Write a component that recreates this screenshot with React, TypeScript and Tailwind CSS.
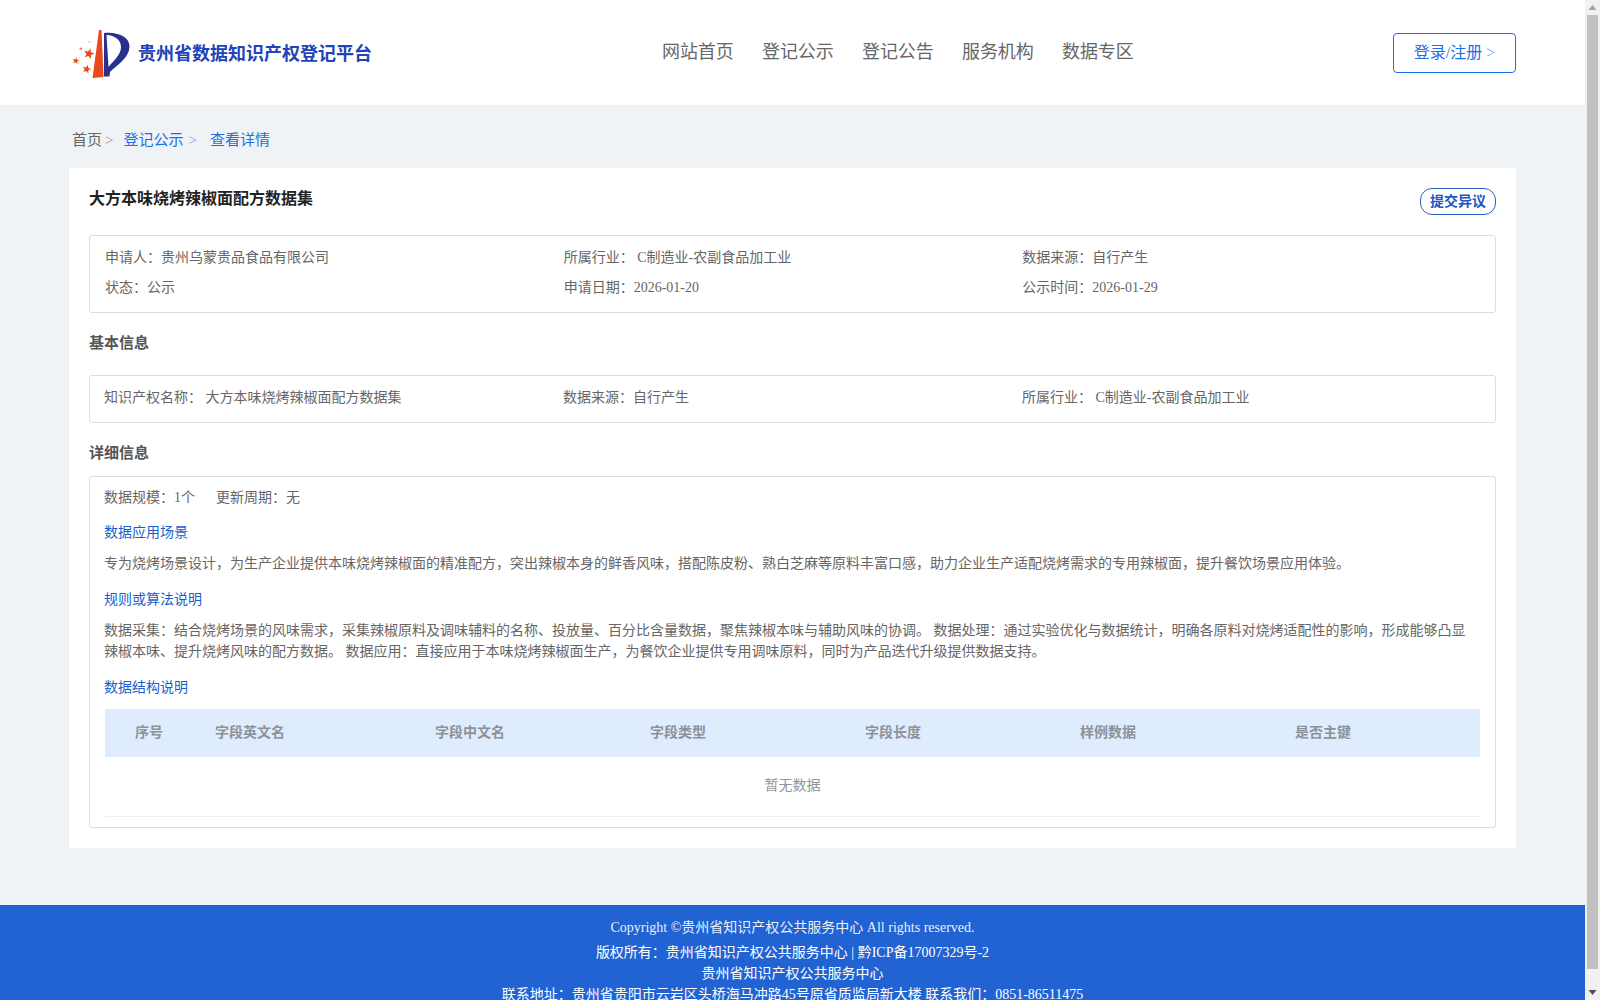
const FONT = "font-['Liberation_Serif','Noto_Sans_CJK_SC',serif]";

const NAV = ["网站首页", "登记公示", "登记公告", "服务机构", "数据专区"];

const COLUMNS = [
  { label: "序号", width: "w-[80px]" },
  { label: "字段英文名", width: "w-[220px]" },
  { label: "字段中文名", width: "w-[215px]" },
  { label: "字段类型", width: "w-[215px]" },
  { label: "字段长度", width: "w-[215px]" },
  { label: "样例数据", width: "w-[215px]" },
  { label: "是否主键", width: "flex-1" },
];

function starPoints(cx: number, cy: number, r: number, rot: number) {
  const pts: string[] = [];
  for (let i = 0; i < 10; i++) {
    const radius = i % 2 === 0 ? r : r * 0.42;
    const a = ((rot + i * 36 - 90) * Math.PI) / 180;
    pts.push(`${(cx + radius * Math.cos(a)).toFixed(2)},${(cy + radius * Math.sin(a)).toFixed(2)}`);
  }
  return pts.join(" ");
}

function Logo() {
  return (
    <svg viewBox="70 26 62 52" className="w-[62px] h-[52px] shrink-0">
      <polygon points={starPoints(89.3, 40.7, 1.3, 0)} fill="#f19a78" />
      <polygon points={starPoints(80.8, 47.7, 2, 10)} fill="#ee7a4e" />
      <polygon points={starPoints(89, 52.8, 5.6, 15)} fill="#e8481a" />
      <polygon points={starPoints(75.8, 59.8, 3.6, 10)} fill="#e8481a" />
      <polygon points={starPoints(86.7, 68.2, 4.6, 15)} fill="#e8481a" />
      <polygon points="99,29 101.5,29 103.5,76 92.5,77" fill="#e8481a" />
      <path
        fillRule="evenodd"
        fill="#27308f"
        d="M104,32 C118,31 130,36 129.5,46 C129,57 117,64 110,71 L109.5,75.5 L104,75.5 Z M106.5,34 L108.5,66 C113,60 121,54 121,46 C121,39 115,34.5 106.5,34 Z"
      />
    </svg>
  );
}

function Header() {
  return (
    <header className="h-[105px] bg-white flex items-center pl-[70px] pr-[69px]">
      <div className="flex items-center w-[592px]">
        <Logo />
        <span className="ml-[6px] mt-[3px] text-[18px] leading-[26px] font-bold text-[#1f43b8] whitespace-nowrap">贵州省数据知识产权登记平台</span>
      </div>
      <nav className="flex gap-[28px] text-[18px] leading-[24px] text-[#666] -mt-[2px] tracking-[-0.1px]">
        {NAV.map((n) => (
          <span key={n} className="w-[72px] whitespace-nowrap">{n}</span>
        ))}
      </nav>
      <div className="ml-auto w-[123px] h-[40px] border border-[#1a6fe8] rounded-[4px] flex items-center justify-center text-[16px] text-[#1a6fe8]">
        登录/注册 <span className="ml-[4px] opacity-60">&gt;</span>
      </div>
    </header>
  );
}

function Breadcrumb() {
  return (
    <div className="h-[63px] pt-[25px] pl-[3px] text-[15px] leading-[21px] flex">
      <span className="text-[#666]">首页</span>
      <span className="ml-[3px] text-[#999]">&gt;</span>
      <span className="ml-[10px] text-[#1a6fe8]">登记公示</span>
      <span className="ml-[5px] text-[#1a6fe8] opacity-60">&gt;</span>
      <span className="ml-[13px] text-[#1a6fe8]">查看详情</span>
    </div>
  );
}

function Info({ label, value }: { label: string; value: string }) {
  return (
    <div className="w-1/3 whitespace-nowrap">
      {label}：{value}
    </div>
  );
}

function SubTitle({ children }: { children: string }) {
  return <div className="text-[14px] leading-[20px] text-[#1a5fd0]">{children}</div>;
}

export default function App() {
  return (
    <div className={`flex h-screen overflow-hidden bg-[#eff3f6] ${FONT}`}>
      <div className="w-[1585px] shrink-0 h-full overflow-hidden">
        <Header />
        <main className="px-[69px] pb-[57px]">
          <Breadcrumb />
          <section className="bg-white h-[680px] pt-[20px] pl-[20px] pr-[20px]">
            <div className="flex justify-between items-start h-[27px]">
              <h1 className="text-[16px] leading-[22px] font-bold text-[#222]">大方本味烧烤辣椒面配方数据集</h1>
              <div className="w-[76px] h-[27px] rounded-[12px] border border-[#2a62c8] flex items-center justify-center text-[14px] font-bold text-[#1a56c4]">
                提交异议
              </div>
            </div>

            <div className="mt-[20px] h-[78px] border border-[#ddd] rounded-[3px] pt-[12px] pl-[15px] pr-[14px] text-[14px] leading-[20px] text-[#666]">
              <div className="flex">
                <Info label="申请人" value="贵州乌蒙贵品食品有限公司" />
                <Info label="所属行业" value=" C制造业-农副食品加工业" />
                <Info label="数据来源" value="自行产生" />
              </div>
              <div className="flex mt-[10px]">
                <Info label="状态" value="公示" />
                <Info label="申请日期" value="2026-01-20" />
                <Info label="公示时间" value="2026-01-29" />
              </div>
            </div>

            <h2 className="mt-[20px] text-[15px] leading-[20px] font-bold text-[#555]">基本信息</h2>

            <div className="mt-[22px] h-[48px] border border-[#ddd] rounded-[3px] pt-[12px] pl-[14px] pr-[14px] text-[14px] leading-[20px] text-[#666] flex">
              <Info label="知识产权名称" value=" 大方本味烧烤辣椒面配方数据集" />
              <Info label="数据来源" value="自行产生" />
              <Info label="所属行业" value=" C制造业-农副食品加工业" />
            </div>

            <h2 className="mt-[20px] text-[15px] leading-[20px] font-bold text-[#555]">详细信息</h2>

            <div className="mt-[13px] h-[352px] border border-[#ddd] rounded-[3px] pt-[11px] pl-[14px] pr-[15px] text-[14px] leading-[20px] text-[#666]">
              <div className="flex">
                <span>数据规模：1个</span>
                <span className="ml-[21px]">更新周期：无</span>
              </div>
              <div className="mt-[15px]"><SubTitle>数据应用场景</SubTitle></div>
              <p className="mt-[11px] pr-[10px]">专为烧烤场景设计，为生产企业提供本味烧烤辣椒面的精准配方，突出辣椒本身的鲜香风味，搭配陈皮粉、熟白芝麻等原料丰富口感，助力企业生产适配烧烤需求的专用辣椒面，提升餐饮场景应用体验。</p>
              <div className="mt-[16px]"><SubTitle>规则或算法说明</SubTitle></div>
              <p className="mt-[10px] pr-[10px] leading-[21px]">数据采集：结合烧烤场景的风味需求，采集辣椒原料及调味辅料的名称、投放量、百分比含量数据，聚焦辣椒本味与辅助风味的协调。 数据处理：通过实验优化与数据统计，明确各原料对烧烤适配性的影响，形成能够凸显辣椒本味、提升烧烤风味的配方数据。 数据应用：直接应用于本味烧烤辣椒面生产，为餐饮企业提供专用调味原料，同时为产品迭代升级提供数据支持。</p>
              <div className="mt-[16px]"><SubTitle>数据结构说明</SubTitle></div>

              <div className="mt-[11px] ml-[1px] h-[48px] bg-[#dfecfd] flex items-center text-[14px] font-bold text-[#8d9199]">
                {COLUMNS.map((c) => (
                  <div key={c.label} className={`${c.width} pl-[30px] whitespace-nowrap`}>{c.label}</div>
                ))}
              </div>
              <div className="ml-[1px] h-[60px] pb-[1px] border-b border-[#ebeef5] flex items-center justify-center text-[14px] text-[#909399]">暂无数据</div>
            </div>
          </section>
        </main>
        <footer className="bg-[#2163d3] pt-[12px] text-center text-[14px] text-white">
          <div className="leading-[21px] opacity-90">Copyright ©贵州省知识产权公共服务中心 All rights reserved.</div>
          <div className="mt-[4px] leading-[21px]">版权所有：贵州省知识产权公共服务中心 | 黔ICP备17007329号-2</div>
          <div className="leading-[21px]">贵州省知识产权公共服务中心</div>
          <div className="leading-[21px]">联系地址：贵州省贵阳市云岩区头桥海马冲路45号原省质监局新大楼 联系我们：0851-86511475</div>
        </footer>
      </div>

      <div className="w-[15px] shrink-0 h-full bg-[#f1f1f1] flex flex-col items-center">
        <svg viewBox="0 0 15 15" className="w-[15px] h-[15px] shrink-0"><polygon points="7.5,5 11.5,10 3.5,10" fill="#a3a3a3" /></svg>
        <div className="w-[11px] h-[954px] bg-[#c1c1c1] shrink-0" />
        <div className="flex-1" />
        <svg viewBox="0 0 15 15" className="w-[15px] h-[15px] shrink-0"><polygon points="3.5,5 11.5,5 7.5,10" fill="#505050" /></svg>
      </div>
    </div>
  );
}
